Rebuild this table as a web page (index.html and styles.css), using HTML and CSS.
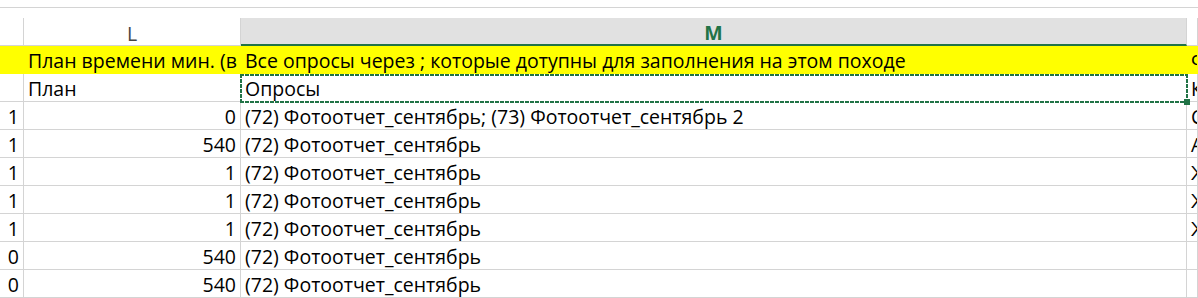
FILE: index.html
```html
<!DOCTYPE html>
<html lang="ru">
<head>
<meta charset="utf-8">
<title>Sheet</title>
<link rel="stylesheet" href="styles.css">
</head>
<body>
<div class="topline"></div>
<div class="spacer"></div>
<div class="sheet">
  <div class="sheet-grid">
    <div class="cell hdr"></div>
    <div class="cell hdr">L</div>
    <div class="cell hdr hdr-sel">M</div>
    <div class="cell hdr"></div>

    <div class="cell fill"></div>
    <div class="cell fill txt">План времени мин. (в</div>
    <div class="cell fill txt">Все опросы через ; которые дотупны для заполнения на этом походе</div>
    <div class="cell fill txt">Ф</div>

    <div class="cell"></div>
    <div class="cell txt">План</div>
    <div class="cell txt">Опросы</div>
    <div class="cell txt">К</div>

    <div class="cell num">1</div><div class="cell num">0</div><div class="cell txt">(72) Фотоотчет_сентябрь; (73) Фотоотчет_сентябрь 2</div><div class="cell txt">С</div>
    <div class="cell num">1</div><div class="cell num">540</div><div class="cell txt">(72) Фотоотчет_сентябрь</div><div class="cell txt">А</div>
    <div class="cell num">1</div><div class="cell num">1</div><div class="cell txt">(72) Фотоотчет_сентябрь</div><div class="cell txt">Ж</div>
    <div class="cell num">1</div><div class="cell num">1</div><div class="cell txt">(72) Фотоотчет_сентябрь</div><div class="cell txt">Ж</div>
    <div class="cell num">1</div><div class="cell num">1</div><div class="cell txt">(72) Фотоотчет_сентябрь</div><div class="cell txt">Ж</div>
    <div class="cell num">0</div><div class="cell num">540</div><div class="cell txt">(72) Фотоотчет_сентябрь</div><div class="cell txt"></div>
    <div class="cell num">0</div><div class="cell num">540</div><div class="cell txt">(72) Фотоотчет_сентябрь</div><div class="cell txt"></div>
  </div>
  <div class="selection"><span class="handle"></span></div>
</div>
</body>
</html>
```

FILE: styles.css
```css
* { box-sizing: border-box; }
html, body { margin: 0; padding: 0; background: #fff; }
body {
  font-family: "Open Sans", "Liberation Sans", sans-serif;
  font-size: 19.5px;
  color: #000;
  overflow: hidden;
}
.topline {
  height: 8px;
  border-bottom: 1px solid #d4d4d4;
}
.spacer { height: 10px; }
.sheet { position: relative; }
.sheet-grid {
  display: grid;
  grid-template-columns: 24px 217px 946px 1fr;
  grid-auto-rows: 28px;
}
.cell {
  border-right: 1px solid #d4d4d4;
  border-bottom: 1px solid #d4d4d4;
  white-space: nowrap;
  overflow: hidden;
  display: flex;
  align-items: flex-end;
  padding: 0 4px 1px 4px;
  line-height: 22px;
}
.hdr {
  justify-content: center;
  align-items: center;
  padding: 4px 0 0 0;
  color: #444;
  font-size: 19.5px;
}
.hdr-sel {
  background: #e1e1e1;
  color: #217346;
  font-weight: 700;
  border-bottom: 2px solid #217346;
}
.fill {
  background: #ffff00;
  border-color: #ffff00;
}
.txt { justify-content: flex-start; }
.num { justify-content: flex-end; }
.selection {
  position: absolute;
  left: 240px;
  top: 56px;
  width: 948px;
  height: 29px;
  background:
    repeating-linear-gradient(90deg, #217346 0 4px, #fff 4px 5px) top left / 100% 2px no-repeat,
    repeating-linear-gradient(90deg, #217346 0 4px, #fff 4px 5px) bottom left / 100% 2px no-repeat,
    repeating-linear-gradient(180deg, #217346 0 4px, #fff 4px 5px) top left / 2px 100% no-repeat,
    repeating-linear-gradient(180deg, #217346 0 4px, #fff 4px 5px) top right / 2px 100% no-repeat;
}
.handle {
  position: absolute;
  right: -2px;
  bottom: -2px;
  width: 6px;
  height: 6px;
  background: #217346;
}
```
